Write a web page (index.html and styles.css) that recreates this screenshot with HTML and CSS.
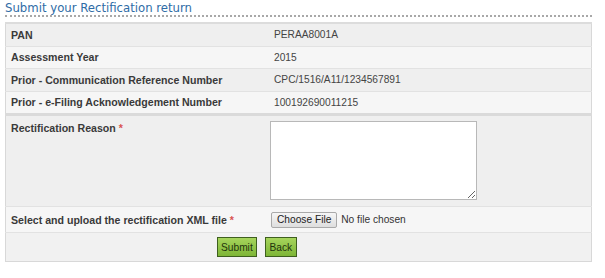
FILE: index.html
```html
<!DOCTYPE html>
<html>
<head>
    <title>Submit your Rectification return</title>
    <link rel="stylesheet" href="styles.css">
</head>
<body>
    <h2 class="page-title">Submit your Rectification return</h2>
    <form id="rectification-form" action="#" method="post">
        <table class="grid">
            <tr class="odd">
                <td class="label">PAN</td>
                <td class="value">PERAA8001A</td>
            </tr>
            <tr class="even">
                <td class="label">Assessment Year</td>
                <td class="value">2015</td>
            </tr>
            <tr class="odd">
                <td class="label">Prior - Communication Reference Number</td>
                <td class="value">CPC/1516/A11/1234567891</td>
            </tr>
            <tr class="even last-info">
                <td class="label">Prior - e-Filing Acknowledgement Number</td>
                <td class="value">100192690011215</td>
            </tr>
            <tr class="reason">
                <td class="label top">Rectification Reason <span class="req">*</span></td>
                <td class="value"><textarea id="reason" name="reason"></textarea></td>
            </tr>
            <tr class="upload">
                <td class="label">Select and upload the rectification XML file <span class="req">*</span></td>
                <td class="value">
                    <span class="file-btn">Choose File</span>
                    <span class="file-name">No file chosen</span>
                </td>
            </tr>
            <tr class="actions">
                <td colspan="2">
                    <input type="submit" class="btn" value="Submit">
                    <input type="button" class="btn" value="Back">
                </td>
            </tr>
        </table>
    </form>
</body>
</html>
```

FILE: styles.css
```css
body {
    margin: 0;
    padding: 0 13px 0 5px;
    background-color: #fff;
    font-family: "Liberation Sans", Arial, sans-serif;
    font-size: 10.2px;
    color: #333;
}

.page-title {
    margin: 0;
    padding: 1px 0 0 0;
    height: 14px;
    line-height: 14px;
    font-family: "DejaVu Sans Condensed", "DejaVu Sans", sans-serif;
    font-weight: normal;
    font-size: 13px;
    color: #2f6ca6;
    border-bottom: 2px dotted #a8a8a8;
}

form {
    margin: 5px 0 0 0;
}

.grid {
    width: 587px;
    border-collapse: collapse;
    border: 1px solid #d8d8d8;
    border-top: 2px solid #dcdcdc;
}

.grid td {
    padding: 0 5px;
    height: 21.5px;
    border-bottom: 1px solid #e2e2e2;
}

.grid td.label {
    width: 251px;
    font-weight: bold;
    font-size: 10.6px;
    color: #3a3a3a;
}

.grid td.value {
    color: #444;
    padding-left: 7px;
}

.odd td {
    background-color: #efefef;
}

.even td {
    background-color: #f6f6f6;
}

.last-info td {
    border-bottom: 3px solid #dadada;
}

.reason td {
    background-color: #efefef;
    height: 80px;
    padding-top: 5px;
    padding-bottom: 4px;
    vertical-align: top;
}

.reason td.top {
    padding-top: 6px;
}

.reason td.value {
    padding-left: 3px;
}

textarea {
    display: block;
    width: 207px;
    height: 79px;
    margin: 0;
    padding: 2px;
    box-sizing: border-box;
    border: 1px solid #b8b8b8;
    background: #fff;
}

.req {
    color: #d9534f;
}

.upload td {
    background-color: #f6f6f6;
    height: 24px;
    padding-top: 1px;
}

.upload td.value {
    padding-left: 4px;
}

.file-btn {
    display: inline-block;
    height: 14px;
    line-height: 14px;
    padding: 0 5px;
    border: 1px solid #a9a9a9;
    border-radius: 2px;
    background: linear-gradient(#f6f6f6, #dedede);
    color: #222;
}

.file-name {
    color: #333;
    margin-left: 1px;
}

.actions td {
    background-color: #f1f1f1;
    height: 28px;
    padding: 0 0 0 211px;
    border-bottom: none;
}

.btn {
    height: 20px;
    margin: 0 5px 0 0;
    padding: 0 3px;
    border: 1px solid #3e5f1e;
    background: linear-gradient(#a6d45c, #7db536);
    color: #22330c;
    font-family: "Liberation Sans", Arial, sans-serif;
    font-size: 10.2px;
    cursor: pointer;
}

.btn + .btn {
    padding: 0 4px;
}
```
